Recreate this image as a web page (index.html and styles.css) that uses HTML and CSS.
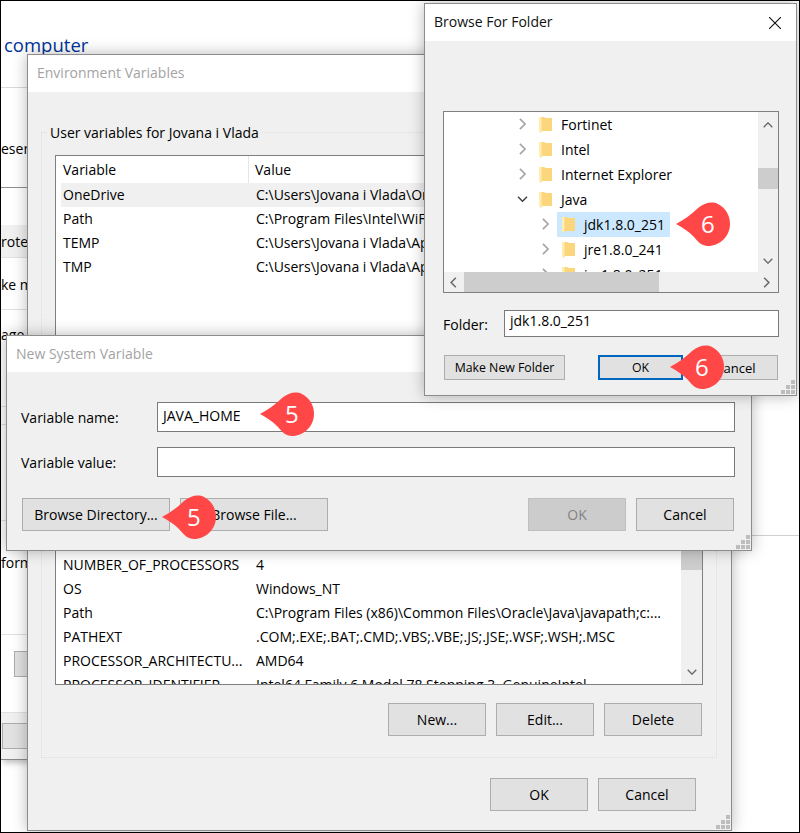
FILE: index.html
```html
<!DOCTYPE html>
<html lang="en">
<head>
<meta charset="utf-8">
<title>Environment Variables</title>
<link rel="stylesheet" href="styles.css">
</head>
<body>
<svg class="defs" width="0" height="0" aria-hidden="true">
  <symbol id="chev-r" viewBox="0 0 8 14"><path d="M1 1l6 6-6 6" fill="none" stroke="currentColor" stroke-width="2"/></symbol>
  <symbol id="chev-l" viewBox="0 0 8 14"><path d="M7 1L1 7l6 6" fill="none" stroke="currentColor" stroke-width="2"/></symbol>
  <symbol id="chev-d" viewBox="0 0 14 8"><path d="M1 1l6 6 6-6" fill="none" stroke="currentColor" stroke-width="2"/></symbol>
  <symbol id="chev-u" viewBox="0 0 14 8"><path d="M1 7l6-6 6 6" fill="none" stroke="currentColor" stroke-width="2"/></symbol>
  <symbol id="folder" viewBox="0 0 13 17">
    <path d="M0 1h5l2 1h6v13H3l-1 2-2-2z" fill="#fbd67c"/>
    <path d="M0 1h2.500v13.500L2 17l-2-2z" fill="#ffeeb0"/>
  </symbol>
  <symbol id="grip" viewBox="0 0 14 14">
    <path d="M10 0h4v4h-4zM5 5h4v4H5zM10 5h4v4h-4zM0 10h4v4H0zM5 10h4v4H5zM10 10h4v4h-4z" fill="#bdbdbd"/>
  </symbol>
  <symbol id="drop" viewBox="0 0 54 44">
    <path d="M0 22Q13 15 22 6C28 1 36-1 42 2 50 6 54 14 54 22 54 34 44 44 32 44 26 44 22 40 18 35 12 29 6 25 0 22z" fill="#ff4747"/>
  </symbol>
</svg>

<main class="stage">
  <section class="backdrop">
    <div class="bd-head"><h1 class="bd-title">computer</h1></div>
    <div class="bd-sec bd-sec-a"><span>eser</span></div>
    <div class="bd-sec bd-sec-b"></div>
    <div class="bd-sec bd-sec-c"><span>rotec</span></div>
    <div class="bd-sec bd-sec-d"><span>ke m</span></div>
    <div class="bd-sec bd-sec-e"><span>age</span></div>
    <div class="bd-sec bd-sec-e2"></div>
    <div class="bd-sec bd-sec-e3"></div>
    <div class="bd-sec bd-sec-f"><span>form</span></div>
    <div class="bd-sec bd-sec-g"><span class="bd-btn"></span></div>
    <div class="bd-sec bd-sec-h"><span class="bd-btn"></span></div>
  </section>
  <div class="bg-rule"></div>

  <section class="win win-env">
    <header class="titlebar titlebar-off">Environment Variables</header>
    <div class="env-body">
      <div class="group group-user">
        <div class="legend">User variables for Jovana i Vlada</div>
        <div class="list list-user">
          <div class="row head"><span class="col-var">Variable</span><span class="col-val">Value</span></div>
          <div class="row row-on"><span class="cell-var">OneDrive</span><span class="cell-val">C:\Users\Jovana i Vlada\OneDrive</span></div>
          <div class="row"><span class="cell-var">Path</span><span class="cell-val">C:\Program Files\Intel\WiFi\bin\</span></div>
          <div class="row"><span class="cell-var">TEMP</span><span class="cell-val">C:\Users\Jovana i Vlada\AppData\Local\Temp</span></div>
          <div class="row"><span class="cell-var">TMP</span><span class="cell-val">C:\Users\Jovana i Vlada\AppData\Local\Temp</span></div>
        </div>
      </div>
      <div class="group group-sys">
        <div class="list list-sys">
          <div class="list-rows">
            <div class="row"><span class="cell-var">NUMBER_OF_PROCESSORS</span><span class="cell-val">4</span></div>
            <div class="row"><span class="cell-var">OS</span><span class="cell-val">Windows_NT</span></div>
            <div class="row"><span class="cell-var">Path</span><span class="cell-val">C:\Program Files (x86)\Common Files\Oracle\Java\javapath;c:...</span></div>
            <div class="row"><span class="cell-var">PATHEXT</span><span class="cell-val">.COM;.EXE;.BAT;.CMD;.VBS;.VBE;.JS;.JSE;.WSF;.WSH;.MSC</span></div>
            <div class="row"><span class="cell-var">PROCESSOR_ARCHITECTU...</span><span class="cell-val">AMD64</span></div>
            <div class="row"><span class="cell-var">PROCESSOR_IDENTIFIER</span><span class="cell-val">Intel64 Family 6 Model 78 Stepping 3, GenuineIntel</span></div>
          </div>
          <div class="sb-v sb-sys">
            <span class="sb-thumb"></span>
            <svg class="sb-arrow" width="10" height="6"><use href="#chev-d"/></svg>
          </div>
        </div>
        <div class="btn-row btn-row-sys">
          <button class="btn">New...</button>
          <button class="btn">Edit...</button>
          <button class="btn">Delete</button>
        </div>
      </div>
      <div class="btn-row btn-row-env">
        <button class="btn">OK</button>
        <button class="btn">Cancel</button>
      </div>
    </div>
    <svg class="grip" width="14" height="14"><use href="#grip"/></svg>
  </section>

  <section class="win win-new">
    <header class="titlebar titlebar-off">New System Variable</header>
    <div class="new-body">
      <div class="form-grid">
        <label class="new-label">Variable name:</label>
        <div class="field">JAVA_HOME</div>
        <label class="new-label">Variable value:</label>
        <div class="field"></div>
      </div>
      <div class="new-actions">
        <button class="btn btn-wide">Browse Directory...</button>
        <button class="btn btn-wide">Browse File...</button>
        <button class="btn btn-off btn-push">OK</button>
        <button class="btn">Cancel</button>
      </div>
    </div>
    <svg class="grip" width="14" height="14"><use href="#grip"/></svg>
  </section>

  <section class="win win-browse">
    <header class="titlebar">
      <span>Browse For Folder</span>
      <svg class="close" width="12" height="12" viewBox="0 0 12 12"><path d="M0 0l12 12M12 0L0 12" stroke="#111" stroke-width="1.1"/></svg>
    </header>
    <div class="browse-body">
      <div class="tree">
        <div class="tree-rows">
          <div class="node-row lvl1"><svg class="chev" width="7" height="12"><use href="#chev-r"/></svg><span class="node"><svg class="ficon" width="13" height="17"><use href="#folder"/></svg>Fortinet</span></div>
          <div class="node-row lvl1"><svg class="chev" width="7" height="12"><use href="#chev-r"/></svg><span class="node"><svg class="ficon" width="13" height="17"><use href="#folder"/></svg>Intel</span></div>
          <div class="node-row lvl1"><svg class="chev" width="7" height="12"><use href="#chev-r"/></svg><span class="node"><svg class="ficon" width="13" height="17"><use href="#folder"/></svg>Internet Explorer</span></div>
          <div class="node-row lvl1"><svg class="chev chev-open" width="11" height="6"><use href="#chev-d"/></svg><span class="node"><svg class="ficon" width="13" height="17"><use href="#folder"/></svg>Java</span></div>
          <div class="node-row lvl2"><svg class="chev" width="7" height="12"><use href="#chev-r"/></svg><span class="node node-on"><svg class="ficon" width="13" height="17"><use href="#folder"/></svg>jdk1.8.0_251</span></div>
          <div class="node-row lvl2"><svg class="chev" width="7" height="12"><use href="#chev-r"/></svg><span class="node"><svg class="ficon" width="13" height="17"><use href="#folder"/></svg>jre1.8.0_241</span></div>
          <div class="node-row lvl2"><svg class="chev" width="7" height="12"><use href="#chev-r"/></svg><span class="node"><svg class="ficon" width="13" height="17"><use href="#folder"/></svg>jre1.8.0_251</span></div>
        </div>
        <div class="sb-v sb-tree">
          <svg class="sb-up" width="10" height="6"><use href="#chev-u"/></svg>
          <span class="sb-thumb sb-thumb-tree"></span>
          <svg class="sb-arrow" width="10" height="6"><use href="#chev-d"/></svg>
        </div>
        <div class="sb-h">
          <svg class="sb-left" width="7" height="11"><use href="#chev-l"/></svg>
          <span class="sb-thumb-h"></span>
          <svg class="sb-right" width="7" height="11"><use href="#chev-r"/></svg>
        </div>
      </div>
      <div class="folder-row">
        <label class="folder-label">Folder:</label>
        <div class="field field-small">jdk1.8.0_251</div>
      </div>
      <div class="browse-actions">
        <button class="btn btn-small btn-make">Make New Folder</button>
        <button class="btn btn-small btn-default">OK</button>
        <button class="btn btn-small btn-cancel">Cancel</button>
      </div>
    </div>
    <svg class="grip" width="14" height="14"><use href="#grip"/></svg>
  </section>

  <div class="callout c-jdk"><svg class="drop" width="54" height="44"><use href="#drop"/></svg><span class="num">6</span></div>
  <div class="callout c-ok"><svg class="drop" width="54" height="44"><use href="#drop"/></svg><span class="num">6</span></div>
  <div class="callout c-name"><svg class="drop" width="54" height="44"><use href="#drop"/></svg><span class="num">5</span></div>
  <div class="callout c-dir"><svg class="drop" width="54" height="44"><use href="#drop"/></svg><span class="num">5</span></div>
</main>
</body>
</html>
```

FILE: styles.css
```css
* { box-sizing: border-box; }
html, body { margin: 0; padding: 0; background: #fff; }
body { font-family: "Open Sans", "Noto Sans", "Liberation Sans", sans-serif; font-size: 14px; color: #000; }
.defs { position: absolute; }

.stage {
  position: relative;
  width: 800px;
  height: 833px;
  overflow: hidden;
  background: #fff;
  outline: 1px solid #000;
  outline-offset: -1px;
}

/* backdrop window */
.backdrop {
  position: absolute;
  left: 1px;
  top: 1px;
  width: 690px;
  height: 759px;
  display: flex;
  flex-direction: column;
  border-bottom: 1px solid #8a8a8a;
  background: #fff;
  box-shadow: 0 5px 6px -2px rgba(0, 0, 0, .25);
}
.bd-head { height: 87px; border-bottom: 1px solid #d9d9d9; padding: 30px 0 0 3px; }
.bd-title { margin: 0; font-size: 18.5px; font-weight: 400; line-height: 28px; color: #003399; white-space: nowrap; }
.bd-sec { white-space: nowrap; overflow: hidden; display: flex; align-items: center; }
.bd-sec-a { height: 100px; border-bottom: 1px solid #8f8f8f; padding-top: 22px; }
.bd-sec-b { height: 37px; }
.bd-sec-c { height: 33px; background: #f0f0f0; border-bottom: 1px solid #e0e0e0; }
.bd-sec-d { height: 52px; border-bottom: 1px solid #e0e0e0; padding-top: 2px; }
.bd-sec-e { height: 97px; align-items: flex-start; border-bottom: 1px solid #e0e0e0; }
.bd-sec-e span { margin-top: 15px; }
.bd-sec-e2 { height: 18px; border-bottom: 1px solid #e0e0e0; }
.bd-sec-e3 { height: 96px; border-bottom: 1px solid #e0e0e0; }
.bd-sec-f { height: 114px; align-items: flex-end; border-bottom: 1px solid #e0e0e0; padding-bottom: 62px; }
.bd-sec-g { height: 78px; border-bottom: 1px solid #e0e0e0; align-items: flex-start; padding: 16px 0 0 13px; }
.bd-sec-h { height: 46px; background: #f0f0f0; align-items: flex-start; padding: 10px 0 0 1px; }
.bd-btn { display: block; width: 40px; height: 26px; background: #e1e1e1; border: 1px solid #adadad; }
.bg-rule { position: absolute; left: 740px; right: 1px; top: 535px; height: 1px; background: #cfcfcf; }

/* shared window chrome */
.win {
  position: absolute;
  display: flex;
  flex-direction: column;
  background: #f0f0f0;
  border: 1px solid #8c8c8c;
  box-shadow: 0 0 14px rgba(0, 0, 0, .28);
}
.titlebar {
  flex: none;
  display: flex;
  align-items: center;
  justify-content: space-between;
  height: 37px;
  padding: 0 15px 2px 9px;
  background: #fff;
  color: #111;
}
.titlebar-off { color: #a3a3a3; }
.close { margin-top: 2px; }
.grip { position: absolute; right: 1px; bottom: 1px; }
.btn {
  width: 98px;
  height: 33px;
  padding: 0;
  font: inherit;
  color: #000;
  background: #e1e1e1;
  border: 1px solid #adadad;
  border-radius: 0;
}
.btn-wide { width: 148px; }
.btn-off { background: #ccc; border-color: #bfbfbf; color: #838383; }
.btn-row { display: flex; justify-content: flex-end; gap: 10px; }
.field {
  height: 30px;
  padding: 3px 5px 0;
  background: #fff;
  border: 1px solid #7a7a7a;
}

/* environment variables */
.win-env { left: 27px; top: 54px; width: 705px; height: 777px; }
.env-body { display: flex; flex-direction: column; flex: 1; padding: 40px 14px 0 13px; }
.group { border: 1px dotted #dcdcdc; padding: 0 13px; }
.group-user { height: 228px; }
.group-sys { margin-top: 15px; height: 383px; padding-top: 24px; }
.legend { width: fit-content; margin: -10px 0 13px -8px; padding: 0 3px; height: 19px; line-height: 19px; background: #f0f0f0; }
.list { background: #fff; border: 1px solid #7f7f7f; overflow: hidden; }
.list-user { height: 195px; padding-left: 5px; }
.list-sys { height: 285px; display: flex; padding-left: 5px; }
.list-rows { flex: 1; min-width: 0; padding-top: 152px; overflow: hidden; }
.row { display: flex; height: 24px; line-height: 24px; padding-left: 2px; white-space: nowrap; }
.head { height: 27px; line-height: 27px; }
.row-on { background: #f0f0f0; }
.col-var { width: 186px; border-right: 1px solid #e5e5e5; flex: none; }
.col-val { padding-left: 6px; }
.cell-var { width: 193px; flex: none; }
.sb-v { flex: none; display: flex; flex-direction: column; background: #f0f0f0; }
.sb-sys { width: 21px; padding-top: 148px; align-items: center; }
.sb-sys .sb-thumb { display: block; width: 100%; height: 21px; background: #cdcdcd; }
.sb-arrow { color: #6b6b6b; margin-top: auto; margin-bottom: 9px; }
.btn-row-sys { margin-top: 18px; margin-right: 1px; }
.btn-row-env { margin-top: 20px; margin-right: 21px; }

/* new system variable */
.win-new { left: 6px; top: 335px; width: 746px; height: 216px; }
.win-new .titlebar { height: 36px; }
.new-body { padding: 30px 16px 0 14px; }
.form-grid { display: grid; grid-template-columns: 136px 1fr; row-gap: 15px; align-items: center; }
.new-actions { display: flex; gap: 10px; margin: 21px 1px 0 1px; }
.btn-push { margin-left: auto; }

/* browse for folder */
.win-browse { left: 424px; top: 3px; width: 373px; height: 393px; }
.browse-body { padding: 70px 17px 0 18px; }
.tree {
  display: grid;
  grid-template-columns: 1fr 20px;
  grid-template-rows: 160px 20px;
  height: 182px;
  background: #fff;
  border: 1px solid #7f7f7f;
}
.tree-rows { overflow: hidden; }
.node-row { display: flex; align-items: stretch; height: 25px; padding-bottom: 1px; }
.lvl1 { padding-left: 75px; }
.lvl2 { padding-left: 98px; }
.chev { flex: none; align-self: center; color: #a6a6a6; margin-right: 8px; }
.chev-open { color: #444; margin: 0 6px 0 -2px; }
.node { display: flex; align-items: center; padding: 0 5px; white-space: nowrap; }
.node-on { background: #cce8ff; margin-bottom: -1px; }
.ficon { flex: none; margin-right: 9px; }
.sb-tree { align-items: center; padding-top: 10px; }
.sb-up { color: #6b6b6b; }
.sb-thumb-tree { flex: none; display: block; width: 100%; height: 21px; margin-top: 40px; background: #cdcdcd; }
.sb-tree .sb-arrow { margin-bottom: 8px; }
.sb-h { grid-column: 1 / 3; display: flex; align-items: center; background: #f0f0f0; padding: 0 6px; }
.sb-left, .sb-right { color: #6b6b6b; flex: none; }
.sb-thumb-h { display: block; width: 195px; height: 100%; margin-left: 7px; background: #cdcdcd; }
.sb-right { margin-left: auto; margin-right: 2px; }
.folder-row { display: grid; grid-template-columns: 61px 1fr; align-items: center; margin-top: 17px; }
.folder-label { padding-top: 2px; }
.field-small { height: 27px; padding-top: 0; }
.browse-actions { display: flex; margin: 18px 0 0 1px; }
.btn-small { height: 25px; font-size: 12.3px; }
.btn-make { width: 121px; }
.btn-default { width: 85px; margin-left: 33px; border: 2px solid #0067c0; }
.btn-cancel { width: 85px; margin-left: 10px; font-size: 13px; }

/* numbered callouts */
.callout { position: absolute; width: 54px; height: 44px; display: flex; align-items: center; }
.drop { position: absolute; left: 0; top: 0; }
.num { position: relative; width: 100%; padding-left: 25px; font-size: 24px; line-height: 44px; color: #fff; }
.c-jdk { left: 676px; top: 202px; }
.c-ok { left: 670px; top: 345px; }
.c-name { left: 260px; top: 392px; }
.c-dir { left: 162px; top: 495px; }
```
